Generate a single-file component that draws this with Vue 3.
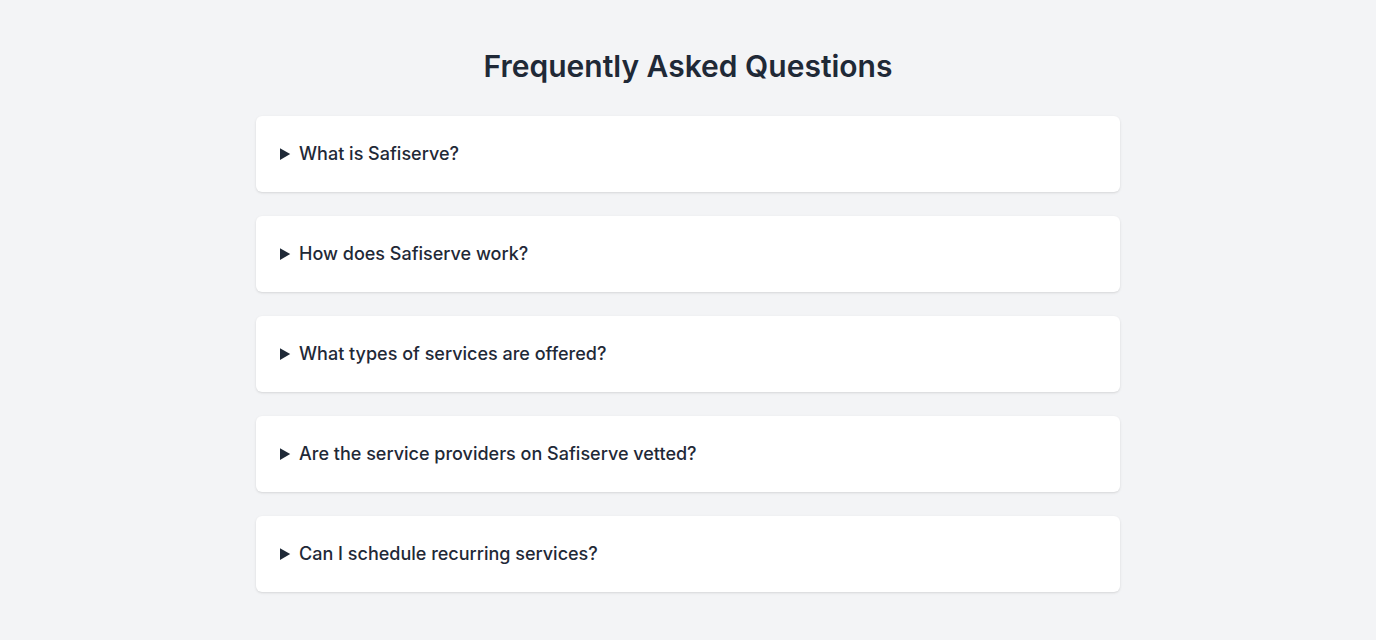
<script setup>
const faqs = [
  { question: 'What is Safiserve?', answer: 'Safiserve connects customers with service providers.' },
  { question: 'How does Safiserve work?', answer: 'Choose a service, pick a provider and book a time.' },
  { question: 'What types of services are offered?', answer: 'Providers offer a range of home and personal services.' },
  { question: 'Are the service providers on Safiserve vetted?', answer: 'Yes, every provider is reviewed before joining.' },
  { question: 'Can I schedule recurring services?', answer: 'Yes, bookings can be repeated on a regular schedule.' },
]
</script>

<template>
  <section class="faq">
    <div class="container">
      <h2 class="title">Frequently Asked Questions</h2>
      <div class="list">
        <details v-for="faq in faqs" :key="faq.question" class="card">
          <summary class="question">{{ faq.question }}</summary>
          <p class="answer">{{ faq.answer }}</p>
        </details>
      </div>
    </div>
  </section>
</template>

<style>
body {
  margin: 0;
  background: #f3f4f6;
}
</style>

<style scoped>
.faq {
  box-sizing: border-box;
  padding: 48px 16px;
  background: #f3f4f6;
  color: #1f2937;
  font-family: Inter, "Liberation Sans", sans-serif;
  font-optical-sizing: none;
}

.container {
  max-width: 864px;
  margin: 0 auto;
}

.title {
  margin: 0 0 32px;
  font-size: 30px;
  line-height: 36px;
  font-weight: 600;
  text-align: center;
}

.list {
  display: flex;
  flex-direction: column;
  gap: 24px;
}

.card {
  padding: 24px;
  border-radius: 6px;
  background: #fff;
  box-shadow: 0 1px 3px rgba(0, 0, 0, 0.1), 0 1px 2px -1px rgba(0, 0, 0, 0.1);
}

.question {
  font-size: 18px;
  line-height: 28px;
  font-weight: 500;
  cursor: pointer;
}

.answer {
  margin: 16px 0 0;
  color: #4b5563;
  font-size: 16px;
  line-height: 24px;
}
</style>
